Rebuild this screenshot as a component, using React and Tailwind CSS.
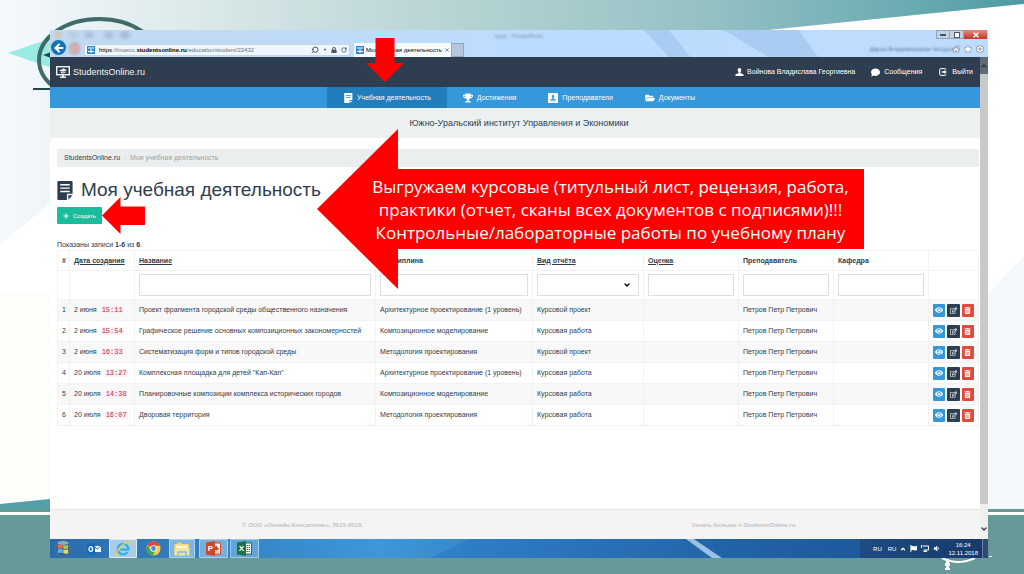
import React, { useState } from 'react';
import {
  FaTrophy,
  FaFolderOpen,
  FaComment,
  FaEye,
  FaRegEdit,
  FaTrashAlt,
  FaPlus,
  FaHome,
  FaStar,
  FaCog,
  FaLock,
  FaVolumeDown,
  FaFlag,
} from 'react-icons/fa';
import { ArrowLeft, ChevronDown, ChevronUp, RotateCw, Search, X } from 'lucide-react';

const works = [
  {
    id: 1,
    date: '2 июня',
    time: '15:11',
    title: 'Проект фрагмента городской среды общественного назначения',
    discipline: 'Архитектурное проектирование (1 уровень)',
    type: 'Курсовой проект',
  },
  {
    id: 2,
    date: '2 июня',
    time: '15:54',
    title: 'Графическое решение основных композиционных закономерностей',
    discipline: 'Композиционное моделирование',
    type: 'Курсовая работа',
  },
  {
    id: 3,
    date: '2 июня',
    time: '16:33',
    title: 'Систематизация форм и типов городской среды',
    discipline: 'Методология проектирования',
    type: 'Курсовой проект',
  },
  {
    id: 4,
    date: '20 июля',
    time: '13:27',
    title: 'Комплексная площадка для детей "Кап-Кап"',
    discipline: 'Архитектурное проектирование (1 уровень)',
    type: 'Курсовая работа',
  },
  {
    id: 5,
    date: '20 июля',
    time: '14:38',
    title: 'Планировочные композиции комплекса исторических городов',
    discipline: 'Композиционное моделирование',
    type: 'Курсовая работа',
  },
  {
    id: 6,
    date: '20 июля',
    time: '16:07',
    title: 'Дворовая территория',
    discipline: 'Методология проектирования',
    type: 'Курсовая работа',
  },
];

const teacher = 'Петров Петр Петрович';

const SlideBackground = () => (
  <svg
    className="absolute inset-0 h-full w-full"
    viewBox="0 0 1024 574"
    preserveAspectRatio="none"
    aria-hidden="true"
  >
    <defs>
      <linearGradient id="band" x1="0" x2="1" y1="0" y2="0">
        <stop offset="0" stopColor="#f4f9fc" />
        <stop offset="0.12" stopColor="#e6eff2" />
        <stop offset="0.4" stopColor="#bdd7d6" />
        <stop offset="0.7" stopColor="#93c0c4" />
        <stop offset="0.9" stopColor="#68a9b0" />
        <stop offset="1" stopColor="#4c9aa3" />
      </linearGradient>
    </defs>
    <rect width="1024" height="574" fill="#ffffff" />
    <path d="M0 0H1024V4L768 30L60 195L2 243L0 243Z" fill="url(#band)" />
    <rect y="294" width="50" height="212" fill="#fcfefa" />
    <path d="M984 298L1024 256V509H984Z" fill="#f2f8fb" />
    <path d="M0 504L50 499V512H0Z" fill="#569ea7" />
    <rect y="509" width="1024" height="3" fill="#669a99" />
    <rect y="512" width="1024" height="3" fill="#ffffff" />
    <rect y="515" width="1024" height="59" fill="#669a99" />
    <path d="M8 53L52 38V68Z" fill="#9aebe1" />
    <ellipse cx="99" cy="60" rx="60" ry="41" fill="none" stroke="#3f6b6a" strokeWidth="4" />
    <path d="M43 55L51 52V58Z" fill="#24484a" />
    <rect x="33" y="88" width="20" height="2" fill="#24484a" />
    <path d="M942 558Q958 566 975 558" fill="none" stroke="#ffffff" strokeWidth="2" />
    <path d="M946 559h3v4h1v3h-1v2h1v2h-5v-2h1v-2h-1v-3h1Z" fill="#ffffff" />
    <rect x="989" y="556" width="3" height="1" fill="#ffffff" />
  </svg>
);

const NoteIcon = ({ className }) => (
  <svg className={className} viewBox="0 0 16 20" fill="none" aria-hidden="true">
    <path d="M1 0H15Q16 0 16 1V13.5H11Q10 13.5 10 14.5V20H1Q0 20 0 19V1Q0 0 1 0Z" fill="currentColor" />
    <path d="M11.5 15H16L11.5 19.7Z" fill="currentColor" />
    <path d="M3 4H13M3 7.5H13M3 11H13" stroke="#ffffff" strokeWidth="1.5" />
  </svg>
);

const NoteSmallIcon = ({ className }) => (
  <svg className={className} viewBox="0 0 16 16" fill="none" aria-hidden="true">
    <path d="M2 0H15V11H10.5V16H2Z" fill="currentColor" />
    <path d="M11.8 12.2H15L11.8 15.8Z" fill="currentColor" />
    <path d="M4.5 4H12.5M4.5 7H12.5" stroke="#217dbb" strokeWidth="1.2" />
  </svg>
);

const MonitorIcon = ({ className }) => (
  <svg className={className} viewBox="0 0 14 12" fill="none" aria-hidden="true">
    <rect x="0.7" y="0.7" width="12.6" height="8" stroke="currentColor" strokeWidth="1.4" />
    <path d="M3 4.5L7.5 2.4L11 4L7 5.8ZM4.7 5.6V7L7 7.6L9.5 6.4V5.2L7 6.4Z" fill="currentColor" />
    <path d="M6.2 9H7.8V10.4H10V12H4V10.4H6.2Z" fill="currentColor" />
  </svg>
);

const PersonIcon = ({ className }) => (
  <svg className={className} viewBox="0 0 16 16" fill="currentColor" aria-hidden="true">
    <path d="M8 0C5.6 0 4.5 1.8 4.5 4.2C4.5 6.2 5.4 7.6 6.3 8.4V10L0.8 12.6Q0 13 0 14V16H16V14Q16 13 15.2 12.6L9.7 10V8.4C10.6 7.6 11.5 6.2 11.5 4.2C11.5 1.8 10.4 0 8 0Z" />
  </svg>
);

const ContactIcon = ({ className }) => (
  <svg className={className} viewBox="0 0 16 16" aria-hidden="true">
    <rect width="16" height="16" rx="1" fill="currentColor" />
    <path
      d="M8 3C6.7 3 6.1 4 6.1 5.3C6.1 6.4 6.6 7.2 7.1 7.6V8.6L4 10V11H12V10L8.9 8.6V7.6C9.4 7.2 9.9 6.4 9.9 5.3C9.9 4 9.3 3 8 3ZM4 12H12V13H4Z"
      fill="#3498db"
    />
  </svg>
);

const ExitIcon = ({ className }) => (
  <svg className={className} viewBox="0 0 16 16" fill="none" aria-hidden="true">
    <path
      d="M13.5 4V3Q13.5 1.2 11.7 1.2H3.3Q1.5 1.2 1.5 3V13Q1.5 14.8 3.3 14.8H11.7Q13.5 14.8 13.5 13V12"
      stroke="currentColor"
      strokeWidth="2"
    />
    <path d="M5.5 6.7H10.5V4.2L15.5 8L10.5 11.8V9.3H5.5Z" fill="currentColor" />
  </svg>
);

const SiteBadge = () => (
  <svg className="h-2 w-2 shrink-0" viewBox="0 0 8 8" aria-hidden="true">
    <rect width="8" height="8" fill="#2b86cc" />
    <path d="M1 2H3M5 2H7M1 5.5H3M5 5.5H7M4 1V7M2.8 4.8L4 6L5.2 4.8" stroke="#ffffff" fill="none" />
  </svg>
);

const BrowserChrome = () => (
  <div className="relative flex h-[27px] items-end overflow-hidden bg-linear-to-r from-[#c3d9f0] via-[#bcdcff] to-[#bddcfd]">
    <div className="absolute top-0.5 left-[5px] flex gap-2 opacity-30 blur-[2px]" aria-hidden="true">
      <span className="h-1.5 w-1.5 bg-orange-400" />
      <span className="h-1.5 w-2 bg-slate-400" />
      <span className="h-1.5 w-2 bg-slate-500" />
      <span className="ml-1 h-1.5 w-2 bg-slate-500" />
      <span className="h-1.5 w-2 bg-slate-600" />
    </div>
    <span className="absolute top-0.5 left-[445px] text-[6px] leading-2 text-slate-600 opacity-60 blur-[1px]">
      курс - PowerPoint
    </span>
    <svg
      className="absolute top-0 left-1/2 h-full w-1/2 opacity-30"
      viewBox="0 0 470 27"
      preserveAspectRatio="none"
      aria-hidden="true"
    >
      <path d="M125 0H150L172 27H150ZM205 0H280L300 27H250Z" fill="#7fa8d8" />
    </svg>

    <button
      type="button"
      aria-label="Назад"
      className="z-10 mb-px flex h-[17px] w-[17px] shrink-0 items-center justify-center rounded-full border border-white/70 bg-[#1473b5] text-white"
    >
      <ArrowLeft className="h-3 w-3" strokeWidth={4} />
    </button>
    <div className="mb-0.5 ml-0.5 h-[13px] w-[11px] shrink-0 rounded-full border border-[#a9aebb] bg-[#d4afb0] blur-[1px]" />
    <div className="mb-px ml-1 flex h-3 w-[266px] shrink-0 items-center gap-1 border border-[#c3d3e6] bg-[#eff6fd] px-0.5">
      <SiteBadge />
      <p className="grow whitespace-nowrap text-[6px] leading-2 text-gray-500">
        <span className="text-black">https</span>://inueco.<b className="text-black">studentsonline.ru</b>
        /education/student/22432
      </p>
      <Search className="h-2 w-2 -scale-x-100 text-gray-600" strokeWidth={3} />
      <span className="text-[4px] text-gray-600">▼</span>
      <FaLock className="h-1.5 w-1.5 text-gray-600" />
      <RotateCw className="h-1.5 w-1.5 text-gray-600" strokeWidth={3} />
    </div>
    <div className="ml-1 flex h-[14px] w-[97px] shrink-0 items-center gap-0.5 bg-[#f7fafd] px-0.5">
      <SiteBadge />
      <span className="grow whitespace-nowrap text-[6px] leading-2 text-black">
        Моя учебная деятельность
      </span>
      <X className="h-1.5 w-1.5 shrink-0 text-gray-500" strokeWidth={3} />
    </div>
    <div className="h-[14px] w-[13px] shrink-0 border border-[#93a7c2] bg-[#b4c7de]" />

    <div className="grow" />
    <span className="mb-1 whitespace-nowrap text-[6px] leading-2 text-slate-700 opacity-70 blur-[1px]">
      Дарья Владимировна Чепурн
    </span>
    <div className="mr-1 mb-1 flex shrink-0 gap-1 text-white">
      <FaHome className="h-2 w-2 stroke-slate-500 stroke-40" />
      <FaStar className="h-2 w-2 stroke-slate-500 stroke-40" />
      <FaCog className="h-2 w-2 stroke-slate-500 stroke-40" />
    </div>
    <div className="absolute top-0 right-px flex h-[9px] text-gray-700">
      <span className="flex w-[14px] items-end justify-center border border-[#8fa3bb] bg-[#c2d2e4] pb-0.5">
        <span className="h-0.5 w-1.5 border border-gray-600 bg-white" />
      </span>
      <span className="flex w-[14px] items-center justify-center border border-l-0 border-[#8fa3bb] bg-[#c2d2e4]">
        <span className="h-1.5 w-1.5 border border-gray-600 bg-white" />
      </span>
      <span className="flex w-[23px] items-center justify-center bg-linear-to-b from-[#e08b80] to-[#c13220] text-white">
        <X className="h-2 w-2" strokeWidth={4} />
      </span>
    </div>
  </div>
);

const SiteHeader = () => (
  <header className="flex h-[30px] items-center bg-[#2e3e50] pr-[7px] pl-1.5 text-white">
    <a href="#home" className="flex items-center gap-[3px] text-[9px] leading-3 text-gray-100">
      <MonitorIcon className="h-3 w-3.5" />
      StudentsOnline.ru
    </a>
    <nav className="ml-auto flex items-center gap-4 text-[7px] leading-[10px]">
      <a href="#profile" className="flex items-center gap-[3px]">
        <PersonIcon className="h-2 w-[9px]" />
        Войнова Владислава Георгиевна
      </a>
      <a href="#messages" className="flex items-center gap-1">
        <FaComment className="h-[9px] w-[9px]" />
        Сообщения
      </a>
      <a href="#logout" className="ml-px flex items-center gap-[5px]">
        <ExitIcon className="h-2 w-2" />
        Выйти
      </a>
    </nav>
  </header>
);

const navItems = [
  { label: 'Учебная деятельность', icon: NoteSmallIcon, href: '#work', active: true },
  { label: 'Достижения', icon: FaTrophy, href: '#achievements' },
  { label: 'Преподаватели', icon: ContactIcon, href: '#teachers' },
  { label: 'Документы', icon: FaFolderOpen, href: '#documents' },
];

const MainNav = () => (
  <nav className="flex h-[21px] justify-center bg-[#3498db] pl-2 text-[7px] leading-[10px] text-white">
    {navItems.map(({ label, icon: Icon, href, active }) => (
      <a
        key={label}
        href={href}
        className={`flex items-center gap-1 px-4 ${active ? 'bg-[#217dbb]' : ''}`}
      >
        <Icon className="h-[10px] w-[10px]" />
        {label}
      </a>
    ))}
  </nav>
);

const columns = [
  { label: '#', width: 'w-3' },
  { label: 'Дата создания', width: 'w-[65px]', sortable: true },
  { label: 'Название', width: '', sortable: true, filter: 'text' },
  { label: 'Дисциплина', width: 'w-[157px]', filter: 'text' },
  { label: 'Вид отчёта', width: 'w-[111px]', sortable: true, filter: 'select' },
  { label: 'Оценка', width: 'w-[95px]', sortable: true, filter: 'text' },
  { label: 'Преподаватель', width: 'w-[95px]', filter: 'text' },
  { label: 'Кафедра', width: 'w-[95px]', filter: 'text' },
  { label: '', width: 'w-[50px]' },
];

const fieldClass = 'block h-[22px] w-full border border-[#dce0e2] bg-white px-1 text-[7px]';
const cellClass = 'border border-[#f1f2f3] px-1';

const ColumnFilter = ({ column }) => {
  const [value, setValue] = useState('');

  if (column.filter === 'text') {
    return (
      <input
        type="text"
        aria-label={column.label}
        value={value}
        onChange={(e) => setValue(e.target.value)}
        className={fieldClass}
      />
    );
  }

  if (column.filter === 'select') {
    return (
      <div className="relative">
        <select
          aria-label={column.label}
          value={value}
          onChange={(e) => setValue(e.target.value)}
          className={`appearance-none ${fieldClass}`}
        >
          <option value=""></option>
          <option value="project">Курсовой проект</option>
          <option value="work">Курсовая работа</option>
        </select>
        <ChevronDown
          className="pointer-events-none absolute top-[7px] right-2 h-2 w-2 text-black"
          strokeWidth={4}
        />
      </div>
    );
  }

  return null;
};

const actionClass = 'flex h-[13px] w-[13px] items-center justify-center rounded-[1px] text-white';

const WorksTable = () => (
  <table className="w-full table-fixed border-collapse text-left text-[7px] leading-[10px] whitespace-nowrap">
    <colgroup>
      {columns.map((column) => (
        <col key={column.label} className={column.width} />
      ))}
    </colgroup>
    <thead>
      <tr className="h-5">
        {columns.map((column) => (
          <th key={column.label} className={`${cellClass} font-bold`}>
            {column.sortable ? (
              <a href="#sort" className="underline">
                {column.label}
              </a>
            ) : (
              column.label
            )}
          </th>
        ))}
      </tr>
      <tr className="h-[29px]">
        {columns.map((column) => (
          <td key={column.label} className={cellClass}>
            <ColumnFilter column={column} />
          </td>
        ))}
      </tr>
    </thead>
    <tbody>
      {works.map((work) => (
        <tr key={work.id} className="h-[21px] odd:bg-[#f8f8f8]">
          <td className={cellClass}>{work.id}</td>
          <td className={cellClass}>
            {work.date}
            <code className="ml-1 rounded-xs bg-[#f9f0f3] px-px font-['Liberation_Mono',monospace] text-[#c7254e]">
              {work.time}
            </code>
          </td>
          <td className={cellClass}>{work.title}</td>
          <td className={cellClass}>{work.discipline}</td>
          <td className={cellClass}>{work.type}</td>
          <td className={cellClass}></td>
          <td className={cellClass}>{teacher}</td>
          <td className={cellClass}></td>
          <td className={cellClass}>
            <div className="flex gap-0.5">
              <button type="button" aria-label="Просмотр" className={`${actionClass} bg-[#3498db]`}>
                <FaEye className="h-2 w-2" />
              </button>
              <button type="button" aria-label="Изменить" className={`${actionClass} bg-[#2c3e50]`}>
                <FaRegEdit className="h-[7px] w-[7px]" />
              </button>
              <button type="button" aria-label="Удалить" className={`${actionClass} bg-[#e04b3f]`}>
                <FaTrashAlt className="h-[7px] w-[7px]" />
              </button>
            </div>
          </td>
        </tr>
      ))}
    </tbody>
  </table>
);

const SitePage = () => (
  <div className="flex min-w-0 grow flex-col bg-white text-[#2e3e50]">
    <SiteHeader />
    <MainNav />
    <p className="flex h-[30px] items-center justify-center bg-[#ecf0f1] pl-2 text-[9px] leading-3">
      Южно-Уральский институт Управления и Экономики
    </p>

    <main className="grow pr-px pl-[7px]">
      <div className="mt-[11px] flex h-[18px] items-center gap-1 bg-[#ebeeef] px-[7px] text-[7px] leading-[10px]">
        <a href="#home">StudentsOnline.ru</a>
        <span className="text-gray-300">/</span>
        <span className="text-[#9aa3a5]">Моя учебная деятельность</span>
      </div>

      <h1 className="mt-[11px] flex items-center gap-2 text-[19px] leading-6">
        <NoteIcon className="h-[19px] w-4" />
        Моя учебная деятельность
      </h1>
      <button
        type="button"
        className="mt-[5px] flex h-[17px] items-center gap-1 rounded-[1px] bg-[#1abc9c] px-1.5 text-[6px] leading-2 text-white"
      >
        <FaPlus className="h-1.5 w-1.5" />
        Создать
      </button>

      <p className="mt-4 text-[7px] leading-[10px]">
        Показаны записи <b>1-6</b> из <b>6</b>.
      </p>
      <WorksTable />
    </main>

    <footer className="grid h-[30px] grid-cols-2 items-center border-t border-[#e7e7e7] bg-[#f4f4f4] pr-4 pl-8 text-center text-[6px] leading-2 font-bold text-[#c3c3c3]">
      <p>© ООО «Онлайн Консалтинг», 2015-2018.</p>
      <a href="#about">Узнать больше о StudentsOnline.ru</a>
    </footer>
  </div>
);

const Scrollbar = () => (
  <div className="flex w-2 shrink-0 flex-col items-center bg-[#f0f0f0]">
    <div className="flex h-[17px] w-full items-center justify-center bg-[#5f6a76] text-[#2b3440]">
      <ChevronUp className="h-2 w-2" strokeWidth={4} />
    </div>
    <div className="w-full grow bg-[#c9c9c9]" />
    <div className="flex h-[35px] items-end pb-1.5 text-gray-700">
      <ChevronDown className="h-2 w-2" strokeWidth={4} />
    </div>
  </div>
);

const StartIcon = () => (
  <svg className="h-[18px] w-[18px]" viewBox="0 0 18 18" aria-hidden="true">
    <circle cx="9" cy="9" r="8.5" fill="#4a7096" />
    <circle cx="9" cy="9" r="7" fill="#33618e" />
    <path d="M3 2.8Q9 -1 15 2.8Q13 5 9 5Q5 5 3 2.8Z" fill="#b7cad8" opacity="0.7" />
    <path d="M3.8 5Q6.2 3.7 8.6 4.8V8.6Q6.2 7.4 3.8 8.7Z" fill="#ec6c3c" />
    <path d="M9.3 5.1Q11.8 6.1 14.2 4.8V8.6Q11.8 9.7 9.3 8.8Z" fill="#9dcb4e" />
    <path d="M3.8 9.5Q6.2 8.3 8.6 9.3V13.1Q6.2 12.1 3.8 13.3Z" fill="#56b2e8" />
    <path d="M9.3 9.6Q11.8 10.5 14.2 9.3V13.2Q11.8 14.3 9.3 13.3Z" fill="#f8d84d" />
  </svg>
);

const OutlookIcon = () => (
  <svg className="h-3 w-[14px]" viewBox="0 0 14 12" aria-hidden="true">
    <path d="M0 1L8 0V12L0 11Z" fill="#1268b9" />
    <ellipse cx="3.8" cy="6" rx="1.8" ry="2.4" fill="none" stroke="#ffffff" strokeWidth="1.3" />
    <rect x="8" y="3" width="6" height="6" fill="#ffffff" />
    <path d="M8 4L10 6.3L14 3" fill="none" stroke="#1268b9" />
  </svg>
);

const ExplorerIcon = () => (
  <svg className="h-4 w-4" viewBox="0 0 16 16" fill="none" aria-hidden="true">
    <path d="M12.5 11A5.3 5.3 0 1 1 13.3 8.7H5.2" stroke="#35aee8" strokeWidth="2.3" />
    <path d="M1.7 14.5C-0.5 11 9 0.5 14.5 1.2C15.6 1.5 15 3.5 14.3 4.6" stroke="#f3c93b" strokeWidth="1.3" />
  </svg>
);

const ChromeIcon = () => (
  <svg className="h-[15px] w-[15px]" viewBox="0 0 16 16" aria-hidden="true">
    <circle cx="8" cy="8" r="7.5" fill="#f7cd3c" />
    <path d="M8 8L1.5 4.2A7.5 7.5 0 0 1 14.9 5H8Z" fill="#dc4a3a" />
    <path d="M1.5 4.2A7.5 7.5 0 0 0 7.2 15.5L10.4 9.8L8 8L5.2 9.6Z" fill="#3fa757" />
    <circle cx="8" cy="8" r="3.4" fill="#ffffff" />
    <circle cx="8" cy="8" r="2.6" fill="#4a8af0" />
  </svg>
);

const FolderIcon = () => (
  <svg className="h-[14px] w-4" viewBox="0 0 16 14" aria-hidden="true">
    <path d="M0.5 2H3L4 0.5H7L8 2H15V13H0.5Z" fill="#f0d67c" />
    <path d="M2 3.5H13.5V7H2Z" fill="#fdf6cf" />
    <path d="M0.5 6H15.5V13.5H0.5Z" fill="#f7e39c" />
    <path d="M4 13.5V10H12V13.5" fill="none" stroke="#7ec3df" strokeWidth="1.5" />
  </svg>
);

const OfficeIcon = ({ letter, color, chart }) => (
  <span className="relative flex h-[15px] w-[15px] items-center">
    <svg className="absolute inset-0" viewBox="0 0 15 15" aria-hidden="true">
      <rect x="7" y="2" width="7.5" height="11" fill="#ffffff" stroke={color} />
      {chart ? (
        <path d="M9.5 5.5A2 2 0 1 0 12.5 7H11V5ZM9 11H13" fill={color} stroke={color} strokeWidth="0.6" />
      ) : (
        <path d="M9.5 4.5H13M9.5 6.5H13M9.5 8.5H13M9.5 10.5H13" stroke={color} strokeDasharray="1.4 0.7" />
      )}
      <path d="M0 1.5L9 0V15L0 13.5Z" fill={color} />
    </svg>
    <span className="relative w-[9px] text-center text-[8px] leading-[10px] font-bold text-white">{letter}</span>
  </span>
);

const pinnedApps = [
  { name: 'Пуск', icon: <StartIcon />, className: 'w-[26px]' },
  { name: 'Outlook', icon: <OutlookIcon />, className: 'ml-0.5 w-[31px]' },
  {
    name: 'Internet Explorer',
    icon: <ExplorerIcon />,
    className: 'w-7 border border-white/60 bg-[#a9cde8]',
  },
  { name: 'Chrome', icon: <ChromeIcon />, className: 'w-8' },
  { name: 'Проводник', icon: <FolderIcon />, className: 'w-[26px] border border-white/40 bg-[#7fb6df]' },
  {
    name: 'PowerPoint',
    icon: <OfficeIcon letter="P" color="#d04727" chart />,
    className: 'ml-1 w-[29px] border border-white/40 bg-[#76b0dd]',
  },
  {
    name: 'Excel',
    icon: <OfficeIcon letter="X" color="#1f7244" />,
    className: 'ml-0.5 w-[29px] border border-white/40 bg-[#62a6d9]',
  },
];

const Taskbar = () => (
  <div className="relative flex h-[19px] items-stretch bg-linear-to-r from-[#2a6cab] via-[#3f97d8] via-35% to-[#17396a] text-white">
    <svg
      className="absolute inset-0 h-full w-full"
      viewBox="0 0 938 19"
      preserveAspectRatio="none"
      aria-hidden="true"
    >
      <path d="M420 0H640L672 19H380Z" fill="#1f6fc0" opacity="0.4" />
      <path d="M636 0H644L672 19H662Z" fill="#b5daf5" opacity="0.8" />
      <path d="M644 0H810V19H672Z" fill="#1c68b8" opacity="0.5" />
    </svg>
    {pinnedApps.map((app) => (
      <button
        key={app.name}
        type="button"
        aria-label={app.name}
        className={`relative flex shrink-0 items-center justify-center rounded-[1px] ${app.className}`}
      >
        {app.icon}
      </button>
    ))}
    <div className="relative ml-auto flex items-center gap-1 text-[6px] leading-2">
      <span className="mr-0.5">RU</span>
      <span>RU</span>
      <ChevronUp className="h-1.5 w-1.5" strokeWidth={5} />
      <FaFlag className="h-[7px] w-[7px]" />
      <svg className="h-[7px] w-2" viewBox="0 0 8 7" fill="none" stroke="currentColor" aria-hidden="true">
        <path d="M1.5 1H7.5V5H2.5M4 5V6.5M2.5 6.5H6M0.5 0V3" />
      </svg>
      <FaVolumeDown className="h-[7px] w-[7px]" />
      <div className="ml-1 text-center">
        <div>16:24</div>
        <div>12.11.2018</div>
      </div>
      <span className="h-full w-1.5 border-l border-white/30 bg-[#2c4a75]" />
    </div>
  </div>
);

// Red pointers drawn over the browser window
const Annotations = () => (
  <>
    <svg className="absolute top-[38px] left-[366px] h-11 w-[38px]" viewBox="0 0 38 44" aria-hidden="true">
      <path d="M9.5 0H28.5V25H38L19 44L0 25H9.5Z" fill="#ff0000" />
    </svg>
    <svg className="absolute top-[197px] left-[102px] h-[37px] w-[43px]" viewBox="0 0 43 37" aria-hidden="true">
      <path d="M0 18.5L18.5 0V9.5H43V28H18.5V37Z" fill="#ff0000" />
    </svg>
    <div className="absolute top-[129px] left-[317px] flex h-40 w-[547px] items-center justify-center pl-10">
      <svg className="absolute inset-0 h-full w-full" viewBox="0 0 547 160" aria-hidden="true">
        <path d="M0 80L81 0V40H547V120H81V160Z" fill="#ff0000" />
      </svg>
      <p className="relative text-center font-['Open_Sans',sans-serif] text-[17px] leading-[23px] whitespace-nowrap text-white">
        Выгружаем курсовые (титульный лист, рецензия, работа,
        <br />
        практики (отчет, сканы всех документов с подписями)!!!
        <br />
        Контрольные/лабораторные работы по учебному плану
      </p>
    </div>
  </>
);

const App = () => (
  <div className="relative flex min-h-screen flex-col pt-[30px] pr-9 pb-4 pl-[50px] font-['Liberation_Sans',Arial,sans-serif]">
    <SlideBackground />
    <div className="relative flex grow flex-col">
      <BrowserChrome />
      <div className="flex grow">
        <SitePage />
        <Scrollbar />
      </div>
      <Taskbar />
    </div>
    <Annotations />
  </div>
);

export default App;
